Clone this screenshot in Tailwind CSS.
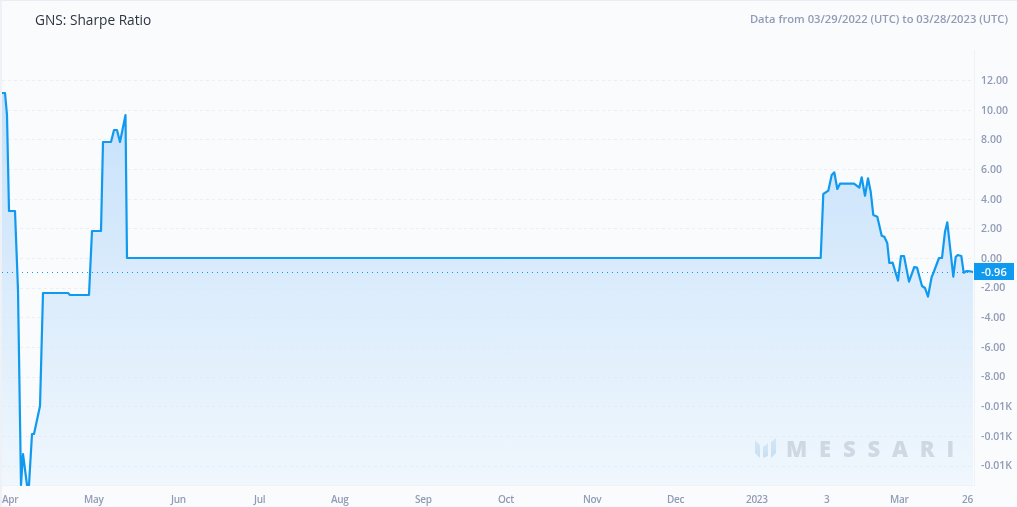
<!DOCTYPE html>
<html lang="en">
<head>
    <meta charset="UTF-8">
    <title>GNS: Sharpe Ratio</title>
    <script src="https://cdn.jsdelivr.net/npm/@tailwindcss/browser@4"></script>
</head>
<body class="bg-[#f9fbfd] font-['Open_Sans',sans-serif] overflow-hidden">
    <div class="w-[1017px] h-[507px] flex flex-col border-t border-t-[#e9ecf2] border-l-2 border-l-[#eef1f6]">
        <!-- Header -->
        <div class="h-[49px] flex justify-between items-start pt-[10px] pl-[33px] pr-[9px]">
            <span class="text-[13.7px] leading-[18px] text-[#2e3440] blur-[0.2px]">GNS: Sharpe Ratio</span>
            <span class="text-[11.2px] leading-[16px] font-semibold text-[#929bb5] blur-[0.4px]">Data from 03/29/2022 (UTC) to 03/28/2023 (UTC)</span>
        </div>

        <!-- Chart -->
        <div class="relative flex h-[436px]">
            <svg class="w-[973px] h-[436px] shrink-0" viewBox="2 50 973 436">
                <defs>
                    <linearGradient id="area" gradientUnits="userSpaceOnUse" x1="0" y1="115" x2="0" y2="485">
                        <stop offset="0" stop-color="#c8e2fb"/>
                        <stop offset="1" stop-color="#f0f7fd"/>
                    </linearGradient>
                    <linearGradient id="mark" x1="0" y1="0" x2="0" y2="1">
                        <stop offset="0" stop-color="#bdd9ee" stop-opacity="0.5"/>
                        <stop offset="1" stop-color="#c4dcf0" stop-opacity="0.9"/>
                    </linearGradient>
                </defs>
                <path fill="url(#area)" d="M2 485V93H5L7 115L9 211H15L18 290L21 485L23 454L27 485H29L32 434H34L40 406L43 293H68L70 295H89L92 231H101L103 142H111L114 130H117L120 142L125.5 115L127 258H820.7L823.3 194L828.3 190.7L831.7 175L834.3 172.3L837.3 189L840 183.7H854L859.3 187.7L861.7 177.3L865 195.7L868 178.3L870.7 191.7L873.3 215L877.3 216.7L881.7 235.7L884.3 236.7L887.3 243.3L889.3 263L892.6 262.6L898 280.6L901 256H904L909 281.6L914.3 267L917 267.6L922 286L925 288L928 296.6L931.7 276.7L933 274L939 258H942L945 231.7L947.3 222.3L953.3 276.7L955.7 257L957.7 255L961.3 256L963.7 272.7L966.7 271L970 271.3L973 272V485Z"/>
                <g stroke="#dfe6f2" stroke-opacity="0.55" stroke-dasharray="3 3">
                    <path d="M2 80.5H974"/>
                    <path d="M2 110.5H974"/>
                    <path d="M2 139.5H974"/>
                    <path d="M2 169.5H974"/>
                    <path d="M2 199.5H974"/>
                    <path d="M2 228.5H974"/>
                    <path d="M2 258.5H974"/>
                    <path d="M2 288.5H974"/>
                    <path d="M2 317.5H974"/>
                    <path d="M2 347.5H974"/>
                    <path d="M2 377.5H974"/>
                    <path d="M2 406.5H974"/>
                    <path d="M2 436.5H974"/>
                    <path d="M2 466.5H974"/>
                </g>
                <!-- axis lines -->
                <path fill="none" stroke="#eff2f7" d="M974.5 50V485.5H2"/>
                <path fill="none" stroke="#0f9af0" stroke-width="2.2" stroke-linejoin="round" d="M2 93H5L7 115L9 211H15L18 290L21 485L23 454L27 485H29L32 434H34L40 406L43 293H68L70 295H89L92 231H101L103 142H111L114 130H117L120 142L125.5 115L127 258H820.7L823.3 194L828.3 190.7L831.7 175L834.3 172.3L837.3 189L840 183.7H854L859.3 187.7L861.7 177.3L865 195.7L868 178.3L870.7 191.7L873.3 215L877.3 216.7L881.7 235.7L884.3 236.7L887.3 243.3L889.3 263L892.6 262.6L898 280.6L901 256H904L909 281.6L914.3 267L917 267.6L922 286L925 288L928 296.6L931.7 276.7L933 274L939 258H942L945 231.7L947.3 222.3L953.3 276.7L955.7 257L957.7 255L961.3 256L963.7 272.7L966.7 271L970 271.3L973 272"/>
                <path stroke="#0f9af0" stroke-dasharray="1 4" d="M2 272.5H974"/>
                <!-- watermark logo -->
                <g fill="url(#mark)">
                    <path d="M755 440L760 445V458L755 453Z"/>
                    <path d="M763 447L768 443V456L763 458Z"/>
                    <path d="M771 442L776 438V453L771 458Z"/>
                </g>
            </svg>

            <!-- Y axis -->
            <div class="flex flex-col pt-[21px] pl-[6px] text-[10.5px] font-semibold text-[#929bb5] blur-[0.4px]">
                <span class="h-[29.7px] leading-[18px]">12.00</span>
                <span class="h-[29.7px] leading-[18px]">10.00</span>
                <span class="h-[29.7px] leading-[18px]">8.00</span>
                <span class="h-[29.7px] leading-[18px]">6.00</span>
                <span class="h-[29.7px] leading-[18px]">4.00</span>
                <span class="h-[29.7px] leading-[18px]">2.00</span>
                <span class="h-[29.7px] leading-[18px]">0.00</span>
                <span class="h-[29.7px] leading-[18px]">-2.00</span>
                <span class="h-[29.7px] leading-[18px]">-4.00</span>
                <span class="h-[29.7px] leading-[18px]">-6.00</span>
                <span class="h-[29.7px] leading-[18px]">-8.00</span>
                <span class="h-[29.7px] leading-[18px]">-0.01K</span>
                <span class="h-[29.7px] leading-[18px]">-0.01K</span>
                <span class="h-[29.7px] leading-[18px]">-0.01K</span>
            </div>

            <!-- Last value tag -->
            <span class="absolute left-[972px] top-[213px] w-[40px] h-[17px] bg-[#0f9af0] text-white text-[11px] leading-[17px] font-semibold text-center blur-[0.2px]">-0.96</span>

            <!-- Watermark -->
            <span class="absolute left-[784px] top-[384px] text-[22px] leading-[28px] font-extrabold tracking-[11.8px] text-[#98a4b1]/35 blur-[0.3px]">MESSARI</span>
        </div>

        <!-- X axis -->
        <div class="relative h-[21px] text-[10px] tracking-[-0.3px] leading-[16px] font-semibold text-[#929bb5] blur-[0.4px]">
            <span class="absolute left-[0px] top-[5px]">Apr</span>
            <span class="absolute left-[82px] top-[5px]">May</span>
            <span class="absolute left-[169px] top-[5px]">Jun</span>
            <span class="absolute left-[252px] top-[5px]">Jul</span>
            <span class="absolute left-[329px] top-[5px]">Aug</span>
            <span class="absolute left-[413px] top-[5px]">Sep</span>
            <span class="absolute left-[496px] top-[5px]">Oct</span>
            <span class="absolute left-[581px] top-[5px]">Nov</span>
            <span class="absolute left-[665px] top-[5px]">Dec</span>
            <span class="absolute left-[744px] top-[5px]">2023</span>
            <span class="absolute left-[822px] top-[5px]">3</span>
            <span class="absolute left-[888px] top-[5px]">Mar</span>
            <span class="absolute left-[960px] top-[5px]">26</span>
        </div>
    </div>
</body>
</html>
